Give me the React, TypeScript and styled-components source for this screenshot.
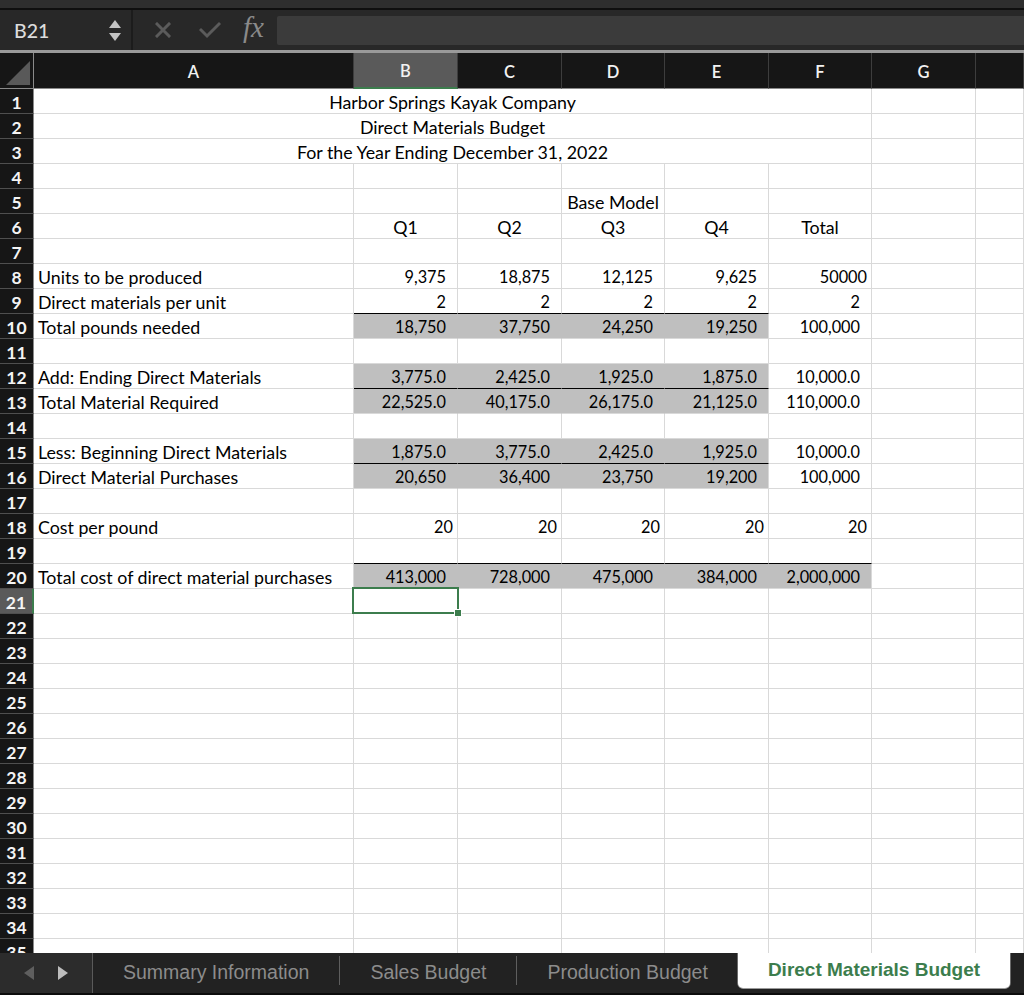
import React from 'react';
import styled, { createGlobalStyle } from 'styled-components';

const GlobalStyle = createGlobalStyle`
  html, body {
    margin: 0;
    padding: 0;
    background: #1f1f1f;
    overflow: hidden;
  }
  * {
    box-sizing: border-box;
  }
`;

const GRID = '#d9d9d9';
const FILL = '#bfbfbf';
const GREEN = '#3c7d4d';
const CELL_FONT = "Lato, 'Open Sans', sans-serif";

interface Line {
  label?: string;
  title?: string;
  values?: string[];
  filled?: number;
  rule?: number;
  general?: boolean;
  centered?: boolean;
}

// rows of the budget, starting at row 1
const lines: Line[] = [
  { title: 'Harbor Springs Kayak Company' },
  { title: 'Direct Materials Budget' },
  { title: 'For the Year Ending December 31, 2022' },
  {},
  { values: ['', '', 'Base Model'], centered: true },
  { values: ['Q1', 'Q2', 'Q3', 'Q4', 'Total'], centered: true },
  {},
  { label: 'Units to be produced', values: ['9,375', '18,875', '12,125', '9,625', '50000'] },
  { label: 'Direct materials per unit', values: ['2', '2', '2', '2', '2'], rule: 4 },
  { label: 'Total pounds needed', values: ['18,750', '37,750', '24,250', '19,250', '100,000'], filled: 4 },
  {},
  { label: 'Add: Ending Direct Materials', values: ['3,775.0', '2,425.0', '1,925.0', '1,875.0', '10,000.0'], filled: 4, rule: 4 },
  { label: 'Total Material Required', values: ['22,525.0', '40,175.0', '26,175.0', '21,125.0', '110,000.0'], filled: 4 },
  {},
  { label: 'Less: Beginning Direct Materials', values: ['1,875.0', '3,775.0', '2,425.0', '1,925.0', '10,000.0'], filled: 4, rule: 4 },
  { label: 'Direct Material Purchases', values: ['20,650', '36,400', '23,750', '19,200', '100,000'], filled: 4 },
  {},
  { label: 'Cost per pound', values: ['20', '20', '20', '20', '20'], general: true },
  { rule: 5 },
  { label: 'Total cost of direct material purchases', values: ['413,000', '728,000', '475,000', '384,000', '2,000,000'], filled: 5 },
];

const SELECTED_ROW = 21;
const TOTAL_ROWS = 35;
const columns = ['A', 'B', 'C', 'D', 'E', 'F', 'G', ''];

const Frame = styled.div`
  width: 1024px;
  height: 995px;
  display: flex;
  flex-direction: column;
  background: #282828;
`;

const TopStrip = styled.div`
  height: 10px;
  background: #2e2e2e;
  border-bottom: 2px solid #0f0f0f;
`;

const FormulaBar = styled.div`
  height: 43px;
  display: flex;
  align-items: center;
  background: #282828;
  border-bottom: 3px solid #9a9a9a;
`;

const NameBox = styled.div`
  width: 133px;
  height: 100%;
  display: flex;
  align-items: center;
  justify-content: space-between;
  padding: 0 10px 0 14px;
  border-right: 2px solid #1c1c1c;
  color: #dcdcdc;
  font-family: ${CELL_FONT};
  font-size: 19.5px;
  font-weight: 500;
`;

const Stepper = styled.div`
  display: flex;
  flex-direction: column;
  gap: 5px;
`;

const Triangle = styled.div<{ $down?: boolean }>`
  width: 0;
  height: 0;
  border-left: 6px solid transparent;
  border-right: 6px solid transparent;
  ${({ $down }) => ($down ? 'border-top: 8px solid #c4c4c4;' : 'border-bottom: 8px solid #c4c4c4;')}
`;

const BarIcons = styled.div`
  display: flex;
  align-items: center;
  gap: 28px;
  padding-left: 22px;
  height: 100%;
`;

const Fx = styled.span`
  font-family: 'Liberation Serif', serif;
  font-style: italic;
  font-size: 29px;
  color: #8a8a8a;
  margin-left: -6px;
  margin-top: -5px;
`;

const FormulaInput = styled.div`
  flex: 1;
  height: 29px;
  margin-left: 13px;
  background: #3b3b3b;
  border-radius: 2px 0 0 2px;
`;

const Sheet = styled.div`
  flex: 1;
  overflow: hidden;
  background: #ffffff;
`;

const Grid = styled.div`
  display: grid;
  grid-template-columns: 34px 320px 104px 104px 103px 104px 103px 104px 1fr;
  grid-template-rows: 36px;
  grid-auto-rows: 25px;
`;

const Corner = styled.div`
  background: #161616;
  border-right: 1px solid #8a8a8a;
  border-bottom: 1px solid #8a8a8a;
  display: flex;
  align-items: flex-end;
  justify-content: flex-end;
  padding: 0 3px 3px 0;
`;

const ColHead = styled.div<{ $active?: boolean }>`
  background: ${({ $active }) => ($active ? '#5a5a5a' : '#161616')};
  border-right: 1px solid #3d3d3d;
  border-bottom: ${({ $active }) => ($active ? `2px solid ${GREEN}` : '1px solid #8a8a8a')};
  color: #f2f2f2;
  font-family: ${CELL_FONT};
  font-size: 16.5px;
  font-weight: 600;
  display: flex;
  align-items: center;
  justify-content: center;
  padding-top: 2px;
`;

const RowHead = styled.div<{ $active?: boolean }>`
  background: ${({ $active }) => ($active ? '#5a5a5a' : '#161616')};
  border-right: ${({ $active }) => ($active ? `2px solid ${GREEN}` : '1px solid #8a8a8a')};
  border-bottom: 1px solid #4f4f4f;
  color: #f4f4f4;
  font-family: ${CELL_FONT};
  font-size: 17.5px;
  font-weight: 700;
  display: flex;
  align-items: center;
  justify-content: center;
  padding-top: 2px;
`;

const Cell = styled.div<{
  $align?: 'left' | 'center' | 'right';
  $pad?: number;
  $fill?: boolean;
  $joined?: boolean;
  $rule?: boolean;
  $span?: number;
  $numeric?: boolean;
  $raised?: boolean;
}>`
  position: relative;
  z-index: ${({ $raised }) => ($raised ? 2 : 'auto')};
  grid-column: span ${({ $span }) => $span ?? 1};
  background: ${({ $fill }) => ($fill ? FILL : '#ffffff')};
  border-right: 1px solid ${({ $fill, $joined }) => ($fill && $joined ? FILL : GRID)};
  border-bottom: 1px solid ${({ $rule }) => ($rule ? '#000000' : GRID)};
  color: #000;
  font-family: ${CELL_FONT};
  font-size: ${({ $numeric }) => ($numeric ? '16.3px' : '17.8px')};
  line-height: 22px;
  white-space: nowrap;
  text-align: ${({ $align }) => $align ?? 'left'};
  padding: 2px ${({ $pad }) => $pad ?? 4}px 0 4px;
`;

const Selection = styled.div`
  position: absolute;
  top: -2px;
  left: -2px;
  right: -2px;
  bottom: -1px;
  border: 2px solid ${GREEN};
  pointer-events: none;
`;

const Handle = styled.div`
  position: absolute;
  right: -5px;
  bottom: -5px;
  width: 8px;
  height: 8px;
  background: ${GREEN};
  border: 1px solid #ffffff;
`;

const TabBar = styled.div`
  height: 42px;
  display: flex;
  align-items: stretch;
  background: #222222;
  border-bottom: 2px solid #0c0c0c;
`;

const Nav = styled.div`
  width: 93px;
  display: flex;
  align-items: center;
  justify-content: center;
  gap: 24px;
  background: #2c2c2c;
  border-right: 1px solid #5a5a5a;
`;

const NavArrow = styled.div<{ $right?: boolean; $dim?: boolean }>`
  width: 0;
  height: 0;
  border-top: 7px solid transparent;
  border-bottom: 7px solid transparent;
  ${({ $right, $dim }) => {
    const c = $dim ? '#5f5f5f' : '#bdbdbd';
    return $right ? `border-left: 10px solid ${c};` : `border-right: 10px solid ${c};`;
  }}
`;

const TabDivider = styled.div`
  width: 1px;
  background: #5e5e5e;
  margin: 3px 0 8px;
`;

const Tab = styled.div<{ $active?: boolean }>`
  display: flex;
  align-items: center;
  padding: 0 30px 2px;
  font-family: 'Liberation Sans', Arial, sans-serif;
  font-size: ${({ $active }) => ($active ? '19px' : '19.5px')};
  color: ${({ $active }) => ($active ? GREEN : '#8c8c8c')};
  font-weight: ${({ $active }) => ($active ? 700 : 400)};
  background: ${({ $active }) => ($active ? '#ffffff' : 'transparent')};
  border-radius: ${({ $active }) => ($active ? '0 0 5px 5px' : '0')};
  margin-bottom: ${({ $active }) => ($active ? '5px' : '0')};
  box-shadow: ${({ $active }) => ($active ? '0 1px 0 #9a9a9a, 1px 0 0 #6a6a6a, -1px 0 0 #6a6a6a' : 'none')};
`;

const CrossIcon = () => (
  <svg width="16" height="16" viewBox="0 0 16 16">
    <path d="M2 2 L14 14 M14 2 L2 14" stroke="#5b5b5b" strokeWidth="3" strokeLinecap="square" />
  </svg>
);

const CheckIcon = () => (
  <svg width="22" height="18" viewBox="0 0 22 18">
    <path d="M2 9 L8 15 L20 3" stroke="#5b5b5b" strokeWidth="3" fill="none" strokeLinecap="square" />
  </svg>
);

const CornerMark = () => (
  <svg width="24" height="24" viewBox="0 0 24 24">
    <path d="M24 0 L24 24 L0 24 Z" fill="#595959" />
  </svg>
);

const renderRow = (row: number) => {
  const line = lines[row - 1] ?? {};
  const cells: React.ReactNode[] = [];
  const active = row === SELECTED_ROW;
  const filled = line.filled ?? 0;

  cells.push(
    <RowHead key="h" $active={active}>
      {row}
    </RowHead>
  );

  if (line.title) {
    cells.push(
      <Cell key="t" $span={6} $align="center">
        {line.title}
      </Cell>
    );
  } else {
    cells.push(<Cell key="a">{line.label}</Cell>);
    for (let i = 0; i < 5; i++) {
      const value = line.values?.[i] ?? '';
      // "50000" is typed in as a plain number, so it has no trailing space
      const plain = line.general || value === '50000';
      cells.push(
        <Cell
          key={i}
          $fill={i < filled}
          $joined={i < filled - 1}
          $rule={i < (line.rule ?? 0)}
          $align={line.centered ? 'center' : 'right'}
          $numeric={!line.centered}
          $pad={line.centered || plain ? 4 : 11}
          $raised={active && i === 0}
        >
          {value}
          {active && i === 0 && (
            <Selection>
              <Handle />
            </Selection>
          )}
        </Cell>
      );
    }
  }
  cells.push(<Cell key="g" />);
  cells.push(<Cell key="x" />);
  return cells;
};

export default function App() {
  const rows = Array.from({ length: TOTAL_ROWS }, (_, i) => i + 1);
  return (
    <>
      <GlobalStyle />
      <Frame>
        <TopStrip />
        <FormulaBar>
          <NameBox>
            B21
            <Stepper>
              <Triangle />
              <Triangle $down />
            </Stepper>
          </NameBox>
          <BarIcons>
            <CrossIcon />
            <CheckIcon />
            <Fx>fx</Fx>
          </BarIcons>
          <FormulaInput />
        </FormulaBar>
        <Sheet>
          <Grid>
            <Corner>
              <CornerMark />
            </Corner>
            {columns.map((c) => (
              <ColHead key={c || 'next'} $active={c === 'B'}>
                {c}
              </ColHead>
            ))}
            {rows.map((r) => (
              <React.Fragment key={r}>{renderRow(r)}</React.Fragment>
            ))}
          </Grid>
        </Sheet>
        <TabBar>
          <Nav>
            <NavArrow $dim />
            <NavArrow $right />
          </Nav>
          <Tab>Summary Information</Tab>
          <TabDivider />
          <Tab>Sales Budget</Tab>
          <TabDivider />
          <Tab>Production Budget</Tab>
          <Tab $active>Direct Materials Budget</Tab>
        </TabBar>
      </Frame>
    </>
  );
}
